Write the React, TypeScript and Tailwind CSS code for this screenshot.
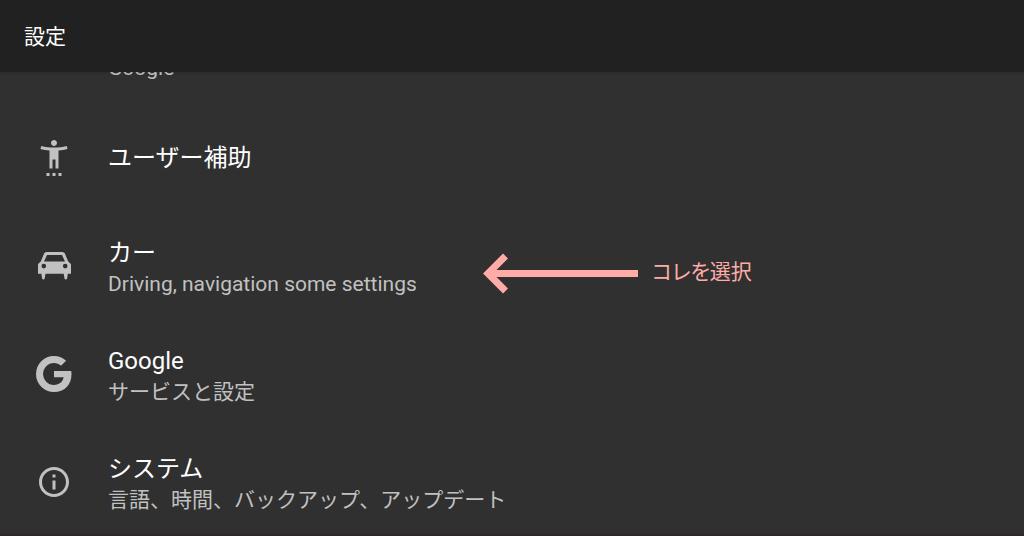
import React from 'react';
import clsx from 'clsx';
import { MdInfoOutline, MdSettingsAccessibility } from 'react-icons/md';

interface SettingItem {
  id: string;
  title?: string;
  summary?: string;
  icon?: React.ReactNode;
  note?: string;
}

const CarIcon = () => (
  <svg className="size-9" viewBox="0 0 36 36" fill="currentColor" aria-hidden="true">
    <path
      fillRule="evenodd"
      d="M10.6 4h15.8c1.2 0 2.1.7 2.6 1.8l3.2 7.6 2.2 2c.4.4.6.9.6 1.5v8.8h-3.2l-.7 4.8a1.4 1.4 0 0 1-2.6 0l-.8-4.8H9.5l-.8 4.8a1.4 1.4 0 0 1-2.6 0l-.7-4.800H2v-8.8c0-.6.2-1.1.6-1.500l2.200-2L8 5.800C8.500 4.700 9.400 4 10.600 4zM11 7 8 13.400h21L26 7zM7.800 15.800a2.300 2.300 0 1 0 0 4.600 2.300 2.300 0 0 0 0-4.600zm21.400 0a2.300 2.300 0 1 0 0 4.600 2.300 2.300 0 0 0 0-4.600z"
    />
  </svg>
);

const GoogleIcon = () => (
  <svg className="size-9" viewBox="0 0 36 36" fill="currentColor" aria-hidden="true">
    <path d="M18 15h17.2c.2 1 .3 2.1.3 3.2C35.5 28.6 28.6 36 18 36a18 18 0 1 1 0-36c4.9 0 8.9 1.8 12.1 4.7L25 9.8c-2-1.8-4.3-2.7-7-2.7a10.9 10.9 0 1 0 0 21.8c5.5 0 8.900-3.200 9.600-7.600H18z" />
  </svg>
);

const items: SettingItem[] = [
  { id: 'accounts', summary: 'Google' },
  { id: 'accessibility', title: 'ユーザー補助', icon: <MdSettingsAccessibility className="size-9" /> },
  {
    id: 'car',
    title: 'カー',
    summary: 'Driving, navigation some settings',
    icon: <CarIcon />,
    note: 'コレを選択',
  },
  { id: 'google', title: 'Google', summary: 'サービスと設定', icon: <GoogleIcon /> },
  {
    id: 'system',
    title: 'システム',
    summary: '言語、時間、バックアップ、アップデート',
    icon: <MdInfoOutline className="size-9" />,
  },
];

const Note = ({ text }: { text: string }) => (
  <div className="pointer-events-none absolute top-10 left-[483px] flex items-center gap-3.5 text-[#ffaca8]">
    <svg className="h-[42px] w-[155px]" viewBox="0 0 155 42" fill="none" stroke="currentColor" strokeWidth="7" aria-hidden="true">
      <path d="M155 21.5H5M22.5 4 5 21.5 22.5 39" />
    </svg>
    <span className="text-[21px] whitespace-nowrap [font-feature-settings:'palt']">{text}</span>
  </div>
);

const SettingRow = ({ item }: { item: SettingItem }) => (
  <li className="relative">
    <button type="button" className="flex h-[108px] w-full items-center px-9 text-left">
      <span className="mr-9 size-9 shrink-0 text-[#c1c1c1]">{item.icon}</span>
      <span className={clsx('flex min-w-0 flex-col', item.summary && 'pt-[5px]')}>
        <span className="min-h-[31px] text-2xl leading-[31px] text-white">{item.title}</span>
        {item.summary && (
          <span className="text-[21px] leading-[31px] text-[#c1c1c1]">{item.summary}</span>
        )}
      </span>
    </button>
    {item.note && <Note text={item.note} />}
  </li>
);

export default function App() {
  return (
    <div
      lang="ja"
      className="flex h-screen flex-col overflow-hidden border-b-2 border-[#2e2528] bg-[#303030] font-[Roboto,'Noto_Sans_CJK_JP',sans-serif]"
    >
      <header className="z-10 flex h-18 shrink-0 items-center bg-[#212121] px-6 pt-1 shadow-sm">
        <h1 className="text-[21px] font-normal text-white">設定</h1>
      </header>
      <main className="min-h-0 flex-1 overflow-hidden">
        {/* list is scrolled so the first row sits mostly under the header */}
        <ul className="-mt-19">
          {items.map((item) => (
            <SettingRow key={item.id} item={item} />
          ))}
        </ul>
      </main>
    </div>
  );
}
